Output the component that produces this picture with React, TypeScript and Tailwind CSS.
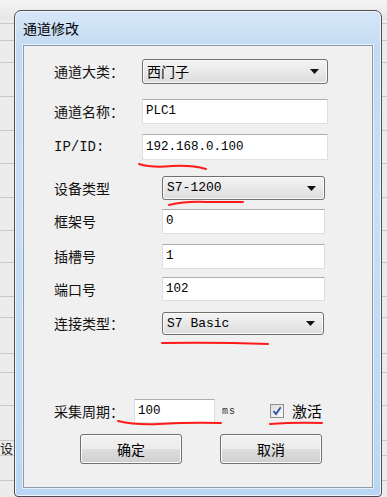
import React from 'react';

const cjk = { fontFamily: '"Noto Sans CJK SC", "Noto Sans", sans-serif' };
const mono = { fontFamily: '"Liberation Mono", "DejaVu Sans Mono", monospace' };

function Combo({ value, width, top, height, isCjk }: { value: string; width: string; top: string; height: string; isCjk?: boolean }) {
  return (
    <div
      className={`${width} ${height} ${top} flex items-center justify-between rounded-[3px] border border-[#707070] bg-gradient-to-b from-[#f4f4f4] via-[#e9e9e9] to-[#dcdcdc] pl-[4px] pr-[8px] shadow-[inset_0_0_0_1px_#fafafa]`}
    >
      <span className={isCjk ? 'text-[14px] text-black' : 'text-[13px] text-black'} style={isCjk ? cjk : mono}>
        {value}
      </span>
      <svg width="9" height="5" viewBox="0 0 9 5">
        <path d="M0 0 H9 L4.5 5 Z" fill="#111" />
      </svg>
    </div>
  );
}

function Field({ value, width, top, height }: { value: string; width: string; top: string; height: string }) {
  return (
    <div
      className={`${width} ${height} ${top} flex items-center border border-[#dbdfe6] border-t-[#abadb3] bg-white pl-[3px] text-[12.5px] text-black`}
      style={mono}
    >
      {value}
    </div>
  );
}

function Label({ text, width, isMono }: { text: string; width: string; isMono?: boolean }) {
  return (
    <span className={`${width} shrink-0 text-[14px] text-[#111]`} style={isMono ? mono : cjk}>
      {text}
    </span>
  );
}

function Button({ text }: { text: string }) {
  return (
    <button
      className="flex h-[30px] w-[102px] items-center justify-center rounded-[3px] border border-[#707070] bg-[linear-gradient(to_bottom,#f2f2f2_0%,#ebebeb_50%,#dddddd_51%,#cfcfcf_100%)] text-[14px] text-black shadow-[inset_0_0_0_1px_#fbfbfb]"
      style={cjk}
    >
      {text}
    </button>
  );
}

export default function App() {
  const bgLines = [23, 40, 62, 96, 130, 163, 197, 230, 262, 296, 317, 353, 372, 405, 440, 455, 480];

  return (
    <div className="relative h-[497px] w-[387px] overflow-hidden bg-[#ececec]">
      {/* app behind the dialog */}
      <div className="absolute inset-x-0 top-0 h-[20px] bg-gradient-to-b from-[#f4f4f4] to-[#e6e6e6]" />
      {bgLines.map((y) => (
        <div key={y} className="absolute inset-x-0 h-px bg-[#c8c8c8]" style={{ top: y }} />
      ))}
      <span className="absolute left-0 top-[438px] text-[13px] text-[#222]" style={cjk}>
        设
      </span>

      {/* dialog window */}
      <div className="absolute left-[14px] top-[10px] flex h-[487px] w-[368px] flex-col rounded-t-[7px] rounded-b-[4px] border border-[#4b4f55] bg-[linear-gradient(to_bottom,#d6e7f8_0%,#c3daf1_8%,#c8dff5_40%,#b9d7f4_100%)] px-[8px] pb-[7px] shadow-[inset_0_0_0_1px_#eef5fc]">
        <div className="flex h-[34px] shrink-0 items-center pl-[0px] pt-[0px]">
          <span className="text-[14px] text-black" style={cjk}>
            通道修改
          </span>
        </div>

        {/* client area */}
        <div className="flex h-[443px] flex-col border border-[#8c9cae] bg-[#f0f0f0] pl-[30px] shadow-[0_0_0_1px_#e8f1fb]">
          <div className="mt-[13px] flex items-center">
            <Label text="通道大类：" width="w-[88px]" />
            <Combo value="西门子" width="w-[186px]" top="" height="h-[25px]" isCjk />
          </div>
          <div className="mt-[15px] flex items-center">
            <Label text="通道名称：" width="w-[88px]" />
            <Field value="PLC1" width="w-[186px]" top="" height="h-[25px]" />
          </div>
          <div className="mt-[10px] flex items-center">
            <Label text="IP/ID:" width="w-[88px]" isMono />
            <Field value="192.168.0.100" width="w-[186px]" top="" height="h-[26px]" />
          </div>
          <div className="mt-[16px] flex items-center">
            <Label text="设备类型" width="w-[108px]" />
            <Combo value="S7-1200" width="w-[163px]" top="" height="h-[24px]" />
          </div>
          <div className="mt-[9px] flex items-center">
            <Label text="框架号" width="w-[108px]" />
            <Field value="0" width="w-[163px]" top="" height="h-[25px]" />
          </div>
          <div className="mt-[10px] flex items-center">
            <Label text="插槽号" width="w-[108px]" />
            <Field value="1" width="w-[163px]" top="" height="h-[25px]" />
          </div>
          <div className="mt-[8px] flex items-center">
            <Label text="端口号" width="w-[108px]" />
            <Field value="102" width="w-[163px]" top="" height="h-[24px]" />
          </div>
          <div className="mt-[11px] flex items-center">
            <Label text="连接类型：" width="w-[108px]" />
            <Combo value="S7 Basic" width="w-[162px]" top="" height="h-[23px]" />
          </div>

          <div className="mt-[64px] flex items-center">
            <Label text="采集周期：" width="w-[80px]" />
            <Field value="100" width="w-[81px]" top="" height="h-[24px]" />
            <span className="ml-[7px] text-[10px] tracking-[1px] text-[#333]" style={mono}>
              ms
            </span>
            <div className="ml-[34px] flex h-[14px] w-[14px] items-center justify-center border border-[#8f8f8f] bg-gradient-to-br from-[#dcdcdc] to-[#fafafa]">
              <svg width="10" height="10" viewBox="0 0 10 10">
                <path d="M1.5 5.2 L4 8 L8.7 1.3" fill="none" stroke="#2b4ea8" strokeWidth="1.8" />
              </svg>
            </div>
            <span className="ml-[8px] text-[15px] text-black" style={cjk}>
              激活
            </span>
          </div>

          <div className="ml-[26px] mt-[11px] flex gap-[38px]">
            <Button text="确定" />
            <Button text="取消" />
          </div>
        </div>
      </div>

      {/* red annotation marks */}
      <svg className="pointer-events-none absolute left-0 top-0" width="387" height="497" viewBox="0 0 387 497">
        <g fill="none" stroke="#ff1a1a" strokeWidth="2" strokeLinecap="round">
          <path d="M139 164 Q 152 168 172 166 Q 192 165 206 169" />
          <path d="M169 205 Q 186 201 206 202 Q 228 202 243 202" />
          <path d="M162 343 Q 215 342 268 344" />
          <path d="M118 421 Q 135 425 158 424 Q 192 422 221 423" />
          <path d="M270 424 Q 296 422 322 423" />
        </g>
      </svg>
    </div>
  );
}
